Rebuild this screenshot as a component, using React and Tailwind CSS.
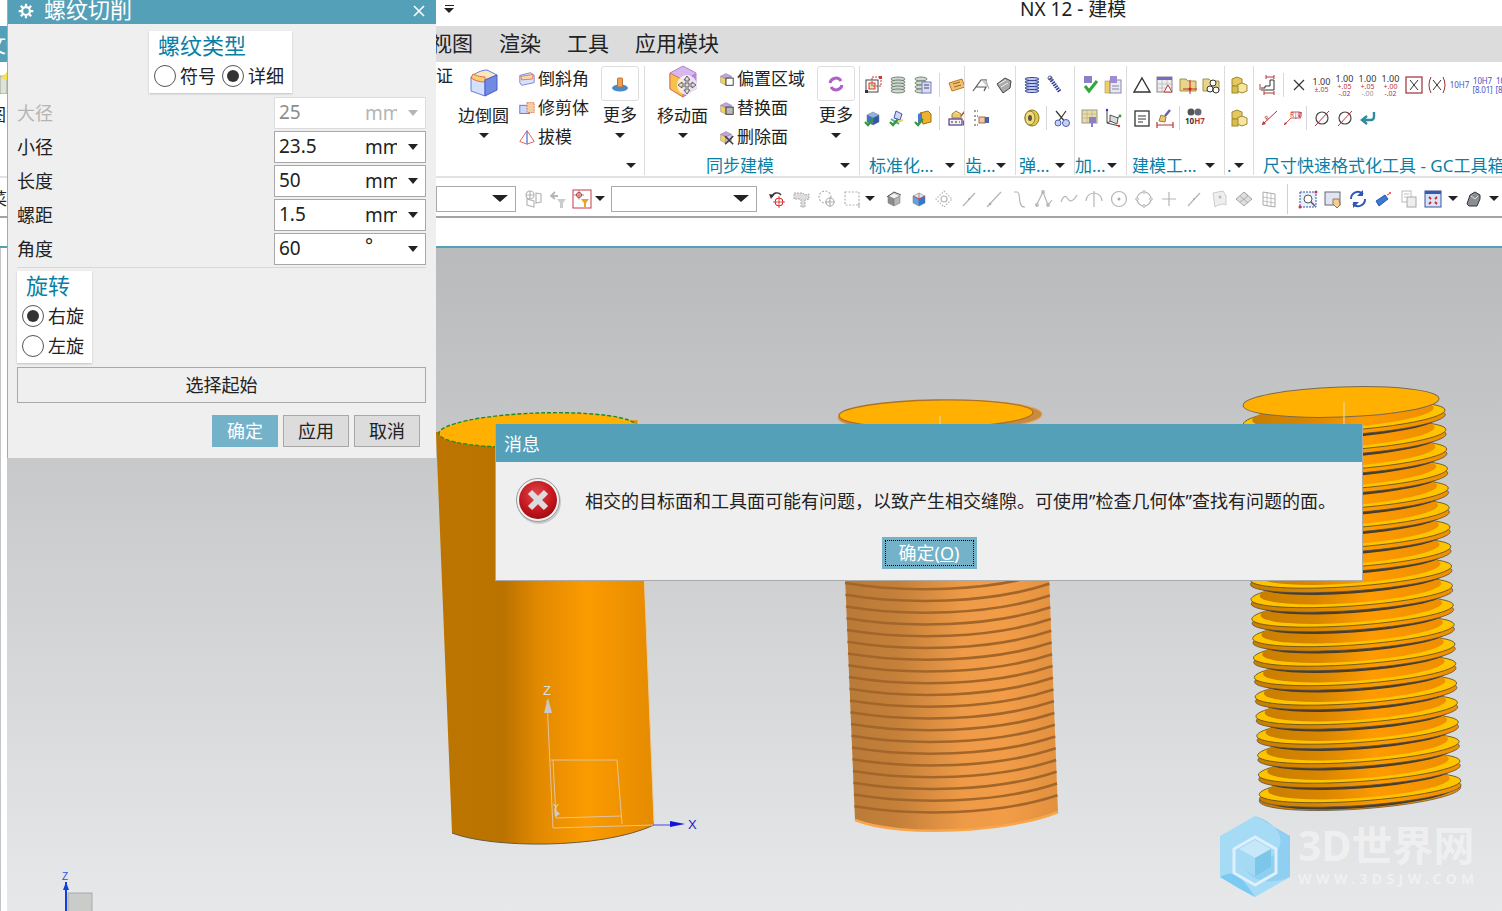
import React from "react";

const FONT = "font-['Noto_Sans','Noto_Sans_CJK_SC',sans-serif]";

const Caret = ({ big }) => (
  <span className={big ? "block w-0 h-0 border-x-[8px] border-x-transparent border-t-[7px] border-t-[#222]" : "block w-0 h-0 border-x-[5px] border-x-transparent border-t-[5px] border-t-[#222]"} />
);

// ribbon + toolbar drawings, all on a 20x20 box
const gray = { fill: "none", stroke: "#b5b5b5", strokeWidth: 1.2 };
const cube = (a, b, c) => (
  <>
    <path d="M4 7l6-3 6 3-6 3z" fill={a} stroke="#777" strokeWidth=".5" />
    <path d="M4 7v7l6 3v-7z" fill={b} stroke="#777" strokeWidth=".5" />
    <path d="M16 7v7l-6 3v-7z" fill={c} stroke="#777" strokeWidth=".5" />
  </>
);
const check = <path d="M2 14l3 3 5-6" fill="none" stroke="#2f9a3a" strokeWidth="2.2" />;
const ICONS = {
  select: (<><rect x="3" y="5" width="12" height="12" fill="none" stroke="#444" /><rect x="6" y="8" width="6" height="6" fill="#d8e8b0" stroke="#d33" /><rect x="9" y="2" width="9" height="9" fill="none" stroke="#d33" strokeDasharray="2 1" /><rect x="2" y="15" width="3" height="3" fill="#333" /><rect x="16" y="1" width="3" height="3" fill="#d33" /></>),
  stack: (<>{[4, 7, 10, 13, 16].map((y) => <ellipse key={y} cx="10" cy={y} rx="7" ry="2" fill="#cfd8cf" stroke="#5d6d5d" strokeWidth=".8" />)}</>),
  stackForm: (<>{[4, 8, 12, 16].map((y) => <ellipse key={y} cx="8" cy={y} rx="6" ry="2" fill="#cfd8cf" stroke="#5d6d5d" strokeWidth=".8" />)}<rect x="9" y="7" width="9" height="11" fill="#d8dcf5" stroke="#7a80c0" /><path d="M11 10h5M11 13h5" stroke="#446" /></>),
  tag: (<><path d="M2 8l13-4 3 8-13 4z" fill="#f4bf6a" stroke="#b9772a" /><path d="M6 9l7-2M7 12l7-2" stroke="#8a6a30" /></>),
  blueCheck: (<>{cube("#8ab4ee", "#3f72c8", "#2f58a8")}{check}</>),
  wrench: (<><path d="M8 3l6 3-2 6-6-2z" fill="#d0d4f5" stroke="#4a50b0" /><path d="M4 16l11-4" stroke="#f0d060" strokeWidth="2" /><path d="M3 11l8 5" stroke="#4ab0a0" strokeWidth="2" />{check}</>),
  yellowCheck: (<><path d="M7 5l8-2 3 3v8l-8 2z" fill="#f0b030" stroke="#a07010" /><path d="M5 6l4-1v9l-4 1z" fill="#4a78d0" />{check}</>),
  boxPen: (<><path d="M5 6l4-3 5 3-4 3z" fill="#f3d98a" stroke="#a08030" /><path d="M5 6v4h9V6" fill="#eccb70" stroke="#a08030" /><rect x="2" y="11" width="13" height="6" fill="#f2f2f2" stroke="#53388c" strokeWidth="1.2" /><path d="M4 14h2M8 14h2M12 14h1" stroke="#333" strokeWidth="1.2" /><path d="M16 12l3 3-3 3z" fill="#b030a8" /><path d="M14 8l4-5" stroke="#c05030" strokeWidth="1.5" /></>),
  gearA: (<><path d="M2 16L10 5h6M5 12h10l-2 4" fill="none" stroke="#555" strokeWidth="1.2" /><path d="M10 5l5 0 3 9" fill="#ccc" stroke="#888" strokeWidth=".6" /></>),
  gearB: (<><path d="M3 9l8-6 6 3-1 7-7 5z" fill="#aaa" stroke="#444" /><path d="M5 9l7-4M7 12l7-4" stroke="#eee" /></>),
  rack: (<><path d="M3 3h4M3 8h4M3 12h3M3 17h4" stroke="#444" strokeDasharray="2 1" /><rect x="8" y="9" width="6" height="6" fill="#f0c8a0" stroke="#a07050" /><rect x="14" y="9" width="4" height="6" fill="#4a60b0" /></>),
  spring: (<>{[4, 7, 10, 13, 16].map((y) => <ellipse key={y} cx="10" cy={y} rx="7" ry="1.5" fill="#c8d0f0" stroke="#2f3f96" strokeWidth="1" />)}</>),
  spring2: (<><path d="M5 3l10 14" stroke="#2f3f96" strokeWidth="4" strokeDasharray="1.5 1" /><circle cx="5" cy="3" r="2" fill="none" stroke="#567" /></>),
  washer: (<><ellipse cx="10" cy="10" rx="7" ry="8" fill="#e2c94a" stroke="#8a7a20" /><ellipse cx="8" cy="10" rx="5" ry="7" fill="#f2dd7a" stroke="#8a7a20" /><ellipse cx="8" cy="10" rx="2" ry="3" fill="#555" /></>),
  scissor: (<><path d="M4 3l10 12M14 3L6 14" stroke="#333" strokeWidth="1.2" /><circle cx="14" cy="15" r="3.5" fill="#c8d0f0" stroke="#4a60b0" /><circle cx="6" cy="15" r="3" fill="#c8d0f0" stroke="#4a60b0" /></>),
  pinCheck: (<><rect x="4" y="1" width="8" height="7" fill="#8a80c8" /><path d="M5 11l4 5 8-10" fill="none" stroke="#2fa83a" strokeWidth="3" /></>),
  pinSheet: (<><rect x="2" y="6" width="5" height="12" fill="#f0d060" stroke="#a08030" strokeWidth=".5" /><rect x="7" y="5" width="11" height="13" fill="#e6eaf5" stroke="#88a" /><rect x="7" y="1" width="7" height="7" fill="#a08ad0" /><path d="M9 11h7M9 14h7" stroke="#889" /></>),
  gridPin: (<><rect x="2" y="2" width="15" height="13" fill="#ecdca0" stroke="#998" /><path d="M2 6h15M2 10h15M7 2v13M12 2v13" stroke="#aaa" strokeWidth=".6" /><rect x="9" y="9" width="7" height="6" fill="#8a80c8" /><path d="M12 15v4" stroke="#8a80c8" strokeWidth="2" /></>),
  axes: (<><path d="M4 2v13l12 3M4 15l12-6" fill="none" stroke="#444" /><path d="M7 7l8 3-1 6-7-3z" fill="#ddd" stroke="#555" /><circle cx="17" cy="8" r="1.4" fill="#2a9a3a" /><circle cx="16" cy="18" r="1.2" fill="#d33" /><circle cx="4" cy="2" r="1.2" fill="#33c" /></>),
  triangle: <path d="M10 3l8 14H2z" fill="none" stroke="#333" strokeWidth="1.4" />,
  table: (<><rect x="2" y="2" width="15" height="15" fill="#eee" stroke="#888" /><rect x="2" y="2" width="15" height="3" fill="#7a68c8" /><path d="M2 9h15M2 13h15M7 5v12M12 5v12" stroke="#aaa" strokeWidth=".6" /><path d="M13 10l4 7h-8z" fill="#fff" stroke="#c33" /></>),
  folderCross: (<><path d="M2 4h6l2 2h8v10H2z" fill="#e8d48a" stroke="#a09040" /><path d="M12 5v14M5 14h14" stroke="#c22" /><circle cx="12" cy="14" r="1.5" fill="#c22" /></>),
  folderRings: (<><path d="M2 4h6l2 2h8v10H2z" fill="#e8d48a" stroke="#a09040" /><circle cx="9" cy="14" r="3" fill="#fff" stroke="#333" /><circle cx="15" cy="15" r="3" fill="#fff" stroke="#333" /><circle cx="12" cy="8" r="3" fill="#fff" stroke="#333" /></>),
  note: (<><rect x="3" y="3" width="14" height="15" fill="#fff" stroke="#333" strokeWidth="1.3" /><path d="M6 8h8M6 11h8M6 14h5" stroke="#333" /></>),
  broom: (<><path d="M15 2l-5 6" stroke="#6a60b0" strokeWidth="2.5" /><path d="M6 7l5 2-1 5-6-1z" fill="#e4c878" stroke="#a08030" /><path d="M2 17h16M2 14v6M18 14v6" stroke="#b8343a" strokeWidth="1.2" /></>),
  binoc: (<><circle cx="6" cy="4" r="3.5" fill="#555" /><circle cx="13" cy="4" r="3.5" fill="#667" /><text x="0" y="16" fontSize="8" fontWeight="700" fill="#333">10<tspan fill="#b8343a">H7</tspan></text></>),
  boxes: (<><path d="M7 2l5 2v6l-5 2-5-2V4z" fill="#e6c860" stroke="#a08830" /><path d="M12 8l5 2v6l-5 2-5-2v-6z" fill="#f5e6a0" stroke="#a08830" /><rect x="2" y="11" width="6" height="7" fill="#d8c048" stroke="#a08830" /></>),
  dimStep: (<><path d="M2 13h4v-2h5V5h4v10H2" fill="none" stroke="#333" /><path d="M7 2h8M7 0v4M15 0v4M5 18h10M5 16v4M15 16v4M1 9v6" stroke="#b8343a" /></>),
  x: <path d="M5 5l10 10M15 5L5 15" stroke="#333" strokeWidth="1.2" />,
  xBox: (<><rect x="2" y="2" width="16" height="16" fill="none" stroke="#9a3038" strokeWidth="1.2" /><path d="M6 5l8 10M14 5L6 15" stroke="#333" /></>),
  xParen: (<><path d="M4 2Q0 10 4 18M16 2q4 8 0 16" fill="none" stroke="#9a3038" /><path d="M6 5l8 10M14 5L6 15" stroke="#333" /></>),
  slant: (<><path d="M3 17L18 3" stroke="#b8343a" /><path d="M3 17l4-1-3-3z" fill="#b8343a" /><text x="6" y="12" fontSize="6" fill="#b8343a" transform="rotate(-40 8 10)">R</text></>),
  rbox: (<><path d="M2 17L9 10h10M9 4h9v6" fill="none" stroke="#b8343a" strokeWidth=".8" /><text x="8" y="9" fontSize="6.5" fill="#b8343a">R|Ø|</text><path d="M2 17l3-1-2-2z" fill="#b8343a" /></>),
  phi: (<><circle cx="10" cy="10" r="6" fill="none" stroke="#444" strokeWidth="1.2" /><path d="M3 18L17 3" stroke="#b8343a" /></>),
  ret: <path d="M16 4v5a3 3 0 01-3 3H6m3-4l-5 4 5 4" fill="none" stroke="#2f8a9a" strokeWidth="2.4" />,
  // toolbar
  gCube: (<><circle cx="6" cy="6" r="4" {...gray} /><path d="M2 6h8M6 2v8" {...gray} /><path d="M3 10l7 2v6l-7-2zM12 4l5 1v8l-5 1z" {...gray} /></>),
  gFun: (<><path d="M3 7h7m-3-4L3 7l4 3" {...gray} strokeWidth="1.8" /><path d="M9 10h9l-3 4v5h-3v-5z" fill="#ccc" /></>),
  redFun: (<><rect x="1" y="1" width="18" height="18" fill="#fff" stroke="#c83a48" /><circle cx="7" cy="6" r="2.5" fill="none" stroke="#a33" /><path d="M2 6h10M7 1.500v9" stroke="#a33" strokeWidth=".7" /><path d="M9 10h8l-3 4v4h-2v-4z" fill="#eba030" /></>),
  undoT: (<><path d="M5 8a5 5 0 019-2" fill="none" stroke="#333" strokeWidth="1.3" /><path d="M2 5l5 1-3 4z" fill="#333" /><circle cx="12" cy="13" r="4" fill="none" stroke="#d22" /><path d="M6 13h12M12 7v12" stroke="#d22" strokeWidth=".8" /></>),
  gBlob: (<><path d="M2 4h9l2 2 4-1v5l-4 1v7H9v-8H2z" fill="#ddd" stroke="#aaa" strokeDasharray="2 1" /></>),
  gDotC: (<><circle cx="8" cy="8" r="6" {...gray} strokeDasharray="2 1.500" /><circle cx="13" cy="13" r="4" {...gray} /><path d="M8 13h10M13 8v10" {...gray} /></>),
  gRect: (<><rect x="3" y="3" width="14" height="13" {...gray} strokeDasharray="2 1.500" /><path d="M17 14v5" {...gray} /></>),
  cubeG: (<>{cube("#f2f2f2", "#8d8d8d", "#b5b5b5")}<path d="M3 8l7-5 7 3" fill="none" stroke="#555" /></>),
  cubeB: (<>{cube("#cfeafa", "#5ba4e8", "#2f78d8")}<path d="M10 4v6M4 7l6 3 6-3" stroke="#e22" strokeWidth=".6" fill="none" /></>),
  gDiam: (<><path d="M10 2l8 8-8 8-8-8z" {...gray} strokeDasharray="1.500 1.500" /><circle cx="10" cy="10" r="3" {...gray} /></>),
  gLine: (<><path d="M4 17L16 4" {...gray} /><circle cx="10" cy="10" r="1" fill="#aaa" /></>),
  gLine2: (<><path d="M3 18L17 3" {...gray} /><circle cx="6" cy="15" r="1.300" fill="#aaa" /></>),
  gS: <path d="M5 3h3c3 0 2 6 3 10s2 5 5 5" {...gray} />,
  gA: (<><path d="M2 17L9 3l5 13 4-5" {...gray} /><circle cx="9" cy="3" r="1.300" {...gray} /><circle cx="14" cy="16" r="1.300" {...gray} /><circle cx="3" cy="16" r="1.300" {...gray} /></>),
  gWave: <path d="M2 13c3-8 5-6 7-3s5 3 9-4" {...gray} />,
  gArc: (<><path d="M2 12a8 8 0 0116 0M10 2v16" {...gray} /></>),
  gCir: (<><circle cx="10" cy="10" r="7.500" {...gray} /><circle cx="10" cy="10" r="1.500" fill="#aaa" /></>),
  gCir4: (<><circle cx="10" cy="10" r="7" {...gray} />{[[10, 3], [10, 17], [3, 10], [17, 10]].map(([x, y]) => <circle key={x + "" + y} cx={x} cy={y} r="1.300" fill="#fff" stroke="#b5b5b5" />)}</>),
  gPlus: <path d="M10 3v14M3 10h14" {...gray} />,
  gSurf: (<><path d="M4 4l10-2 3 5v9c-4-2-8 0-11 2z" fill="#eee" stroke="#ccc" /><circle cx="11" cy="8" r="1.500" fill="#bbb" /></>),
  gGrid: (<><path d="M10 3l8 7-8 7-8-7z" fill="#ddd" stroke="#aaa" /><path d="M6 7l8 7M10 3l4 4M6 13l8-6" stroke="#999" strokeWidth=".7" /></>),
  gMesh: (<><path d="M4 3l12 2v13L4 16z" fill="none" stroke="#aaa" /><path d="M8 4v13M12 4.500v13M4 8l12 2M4 12l12 2" stroke="#aaa" strokeWidth=".7" /></>),
  zoomBox: (<><rect x="2" y="3" width="16" height="15" fill="#e8f0fa" stroke="#3a50c0" strokeDasharray="2 1" /><circle cx="10" cy="10" r="4" fill="#fff" stroke="#555" /><path d="M13 13l4 4" stroke="#555" strokeWidth="1.500" /><circle cx="2" cy="18" r="1.500" fill="#c33" /><circle cx="18" cy="3" r="1.500" fill="#c33" /></>),
  handWin: (<><rect x="2" y="3" width="15" height="13" fill="#dfe6f2" stroke="#667" /><path d="M10 10l6 0 1 6-3 3-4-4z" fill="#f2cf9a" stroke="#a07a40" /></>),
  rotate: (<><path d="M3 10a7 7 0 0112-5M17 10a7 7 0 01-12 5" fill="none" stroke="#2f56b8" strokeWidth="2" /><path d="M15 1v6h-6" fill="#2f56b8" /><path d="M5 19v-6h6" fill="#2f56b8" /></>),
  prism: (<><path d="M3 12l9-6 3 4-9 7z" fill="#3a78d8" stroke="#2a58a8" /><circle cx="17" cy="4" r="1" fill="#e33" /><path d="M14 6l2-1" stroke="#e33" /></>),
  pages: (<><rect x="4" y="2" width="9" height="11" fill="#fff" stroke="#bbb" /><rect x="9" y="8" width="9" height="10" fill="#eee" stroke="#aaa" /><path d="M6 5h5M6 8h2" stroke="#bbb" /></>),
  redGrid: (<><rect x="2" y="2" width="16" height="16" fill="#d8e4f8" stroke="#3a50a0" /><rect x="2" y="2" width="16" height="3" fill="#3a5ab0" /><path d="M6 8l2 2M14 8l-2 2M6 15l2-2M14 15l-2-2" stroke="#d22" strokeWidth="1.800" /></>),
  gBoxes: (<><path d="M3 15l3-9 5-3 5 3v4l-3 7H5z" fill="#8a8f96" stroke="#333" /><path d="M7 7l4 3 3-3" fill="none" stroke="#ddd" /></>),
  // small ribbon
  chamfer: (<><path d="M2 6l12-3 4 3v8l-14 3-2-3z" fill="#d9e2fb" stroke="#6f7fe0" /><path d="M3 7l14-2-1 5-12 1z" fill="#f6d9a8" stroke="#e4705a" /></>),
  trim: (<><rect x="2" y="7" width="11" height="9" fill="#cdd8fa" stroke="#5a6ce0" /><rect x="10" y="4" width="8" height="11" fill="#f4cda0" stroke="#e07a50" strokeDasharray="2 1" /></>),
  draft: (<><path d="M10 3L2 15l8 3 8-3z" fill="#fff" stroke="#e05050" /><path d="M10 3v15" stroke="#5a78d8" strokeWidth="1.500" /></>),
  pushPull: (<><ellipse cx="10" cy="14" rx="8" ry="3.500" fill="#4a88c8" /><rect x="7.500" y="4" width="5" height="9" rx="1" fill="#f0a050" stroke="#c07030" /></>),
  offset: (<>{cube("#c8a0e8", "#f4d060", "#d8d0f0")}<rect x="10" y="9" width="8" height="8" fill="#fff" stroke="#333" /></>),
  replace: (<>{cube("#c8a0e8", "#f4d060", "#d8d0f0")}<rect x="10" y="9" width="8" height="8" fill="#bbb" stroke="#333" /></>),
  del: (<>{cube("#c8a0e8", "#f4d060", "#d8d0f0")}<path d="M9 9l9 9M18 9l-9 9" stroke="#444" strokeWidth="1.800" /></>),
  cycle: (<><path d="M4 9a6 6 0 0111-2" fill="none" stroke="#b060c8" strokeWidth="3" /><path d="M16 11a6 6 0 01-11 2" fill="none" stroke="#b060c8" strokeWidth="3" /></>),
};

const Ic = ({ n, size = 20 }) => (
  <svg viewBox="0 0 20 20" width={size} height={size} className="block shrink-0">{ICONS[n]}</svg>
);

const Cell = ({ n, children, w = "w-[23px]" }) => (
  <span className={`${w} h-[24px] flex items-center justify-center shrink-0`}>{n ? <Ic n={n} /> : children}</span>
);
const Sep = () => <span className="w-px h-[24px] bg-[#d8d8d8] mx-[3px] shrink-0" />;

const Tol = ({ a, b, c, tone = "text-[#b8343a]" }) => (
  <span className="flex flex-col items-center text-[7px] leading-[7px]">
    <span className="text-[#333] text-[9px] leading-[9px]">1.00</span>
    <span className={tone}>{a}</span>
    {b && <span className={c || tone}>{b}</span>}
  </span>
);

function IconGroup({ w, pl, row1, row2, label, gap = "", last }) {
  return (
    <div className={`${w} shrink-0 flex flex-col mt-[4px] mb-px ${last ? "" : "border-r border-[#dcdcdc]"}`}>
      <div className={`h-[90px] pt-[7px] ${pl} overflow-hidden`}>
        <div className={`flex ${gap} items-center`}>{row1}</div>
        <div className={`flex ${gap} items-center mt-[9px]`}>{row2}</div>
      </div>
      {label}
    </div>
  );
}

const Lab = ({ text, pad = "pl-[9px] pr-[9px]" }) => (
  <div className={`h-[19px] flex items-center justify-between ${pad} text-[17px] leading-[19px] text-[#0a7fa6] whitespace-nowrap`}>
    <span>{text}</span>
    <Caret />
  </div>
);

const icons = (list) => list.map((n, i) => (n === "|" ? <Sep key={i} /> : <Cell key={i} n={n} />));

const SmallItem = ({ n, text }) => (
  <div className="h-[29px] flex items-center gap-[2px] text-[17px] leading-[22px] text-[#222] whitespace-nowrap">
    <Ic n={n} size={18} />
    <span>{text}</span>
  </div>
);

const BigBtn = ({ w, label, children }) => (
  <div className={`${w} flex flex-col items-center shrink-0`}>
    <div className="h-[33px] flex items-end">{children}</div>
    <div className="mt-[5px] h-[24px] text-[17px] leading-[24px] text-[#222] whitespace-nowrap">{label}</div>
    <div className="mt-[5px]"><Caret /></div>
  </div>
);

const MoreBtn = ({ n }) => (
  <div className="w-[38px] flex flex-col items-center shrink-0">
    <div className="w-[38px] h-[35px] border border-[#dedede] rounded-[3px] flex items-center justify-center"><Ic n={n} /></div>
    <div className="mt-[2px] h-[24px] text-[17px] leading-[24px] text-[#222]">更多</div>
    <div className="mt-[6px]"><Caret /></div>
  </div>
);

function Ribbon() {
  return (
    <div className="h-[116px] flex border-b-2 border-[#e2e2e2] bg-white">
      <div className="w-[436px] shrink-0 relative overflow-hidden">
        <div className="pt-[8px] flex flex-col">
          <svg viewBox="0 0 8 24" width="8" height="24" className="block"><rect x="0" y="6" width="7" height="18" fill="#dde3d5" stroke="#777" strokeWidth=".6" /><path d="M1 8l6-6v8z" fill="#f8e24a" /></svg>
          <span className="block -ml-[11px] mt-[10px] text-[17px] leading-[22px] text-[#222]">图</span>
        </div>
      </div>
      <div className="w-[209px] shrink-0 flex flex-col mt-[4px] mb-px border-r border-[#dcdcdc]">
        <div className="h-[90px] flex">
          <div className="w-[22px] shrink-0 text-[17px] leading-[22px] text-[#222] -mt-[1px]">证</div>
          <BigBtn w="w-[51px]" label="边倒圆">
            <svg viewBox="0 0 32 32" width="32" height="32" className="block"><path d="M3 10c4-4 11-7 16-7l10 5-12 5C12 13 6 12 3 10z" fill="#f9e6c0" stroke="#6878e0" /><path d="M3 10c4 3 9 4 14 4v15L3 24z" fill="#d5e1fa" stroke="#6878e0" /><path d="M3 11c5 3 9 4 14 4v-5C12 10 7 8 5 7z" fill="#f8d270" stroke="#e56a4e" /><path d="M17 13l12-5v15l-12 6z" fill="#6f8be2" stroke="#4a5cc8" /></svg>
          </BigBtn>
          <div className="ml-[9px] w-[83px] shrink-0 -mt-[2px]">
            <SmallItem n="chamfer" text="倒斜角" />
            <SmallItem n="trim" text="修剪体" />
            <SmallItem n="draft" text="拔模" />
          </div>
          <MoreBtn n="pushPull" />
        </div>
        <div className="h-[19px] flex items-center justify-end pr-[8px]"><Caret /></div>
      </div>
      <div className="w-[215px] shrink-0 flex flex-col mt-[4px] mb-px border-r border-[#dcdcdc]">
        <div className="h-[90px] flex pl-[12px]">
          <BigBtn w="w-[51px]" label="移动面">
            <svg viewBox="0 0 34 34" width="34" height="34" className="block"><path d="M17 1l13 7v16l-13 8-13-8V8z" fill="#d8b8ec" stroke="#b080d0" /><path d="M4 8l13 7v17L4 24z" fill="#f6c24c" stroke="#e0705a" /><path d="M17 15l13-7v16l-13 8z" fill="#b684d8" /><circle cx="21" cy="20" r="10" fill="#fff" opacity=".75" /><path d="M21 11l3 4h-2v4h4v-2l4 3-4 3v-2h-4v4h2l-3 4-3-4h2v-4h-4v2l-4-3 4-3v2h4v-4h-2z" fill="#dcdcdc" stroke="#555" strokeWidth=".9" /></svg>
          </BigBtn>
          <div className="ml-[9px] w-[100px] shrink-0 -mt-[2px]">
            <SmallItem n="offset" text="偏置区域" />
            <SmallItem n="replace" text="替换面" />
            <SmallItem n="del" text="删除面" />
          </div>
          <MoreBtn n="cycle" />
        </div>
        <div className="h-[19px] flex items-center pr-[9px] text-[17px] leading-[19px] text-[#0a7fa6]">
          <span className="ml-[61px] flex-1">同步建模</span>
          <Caret />
        </div>
      </div>
      <IconGroup w="w-[105px]" pl="pl-px" gap="gap-[2px]"
        row1={icons(["select", "stack", "stackForm", "|", "tag"])}
        row2={icons(["blueCheck", "wrench", "yellowCheck", "|", "boxPen"])}
        label={<Lab text="标准化..." />} />
      <IconGroup w="w-[51px]" pl="pl-[4px]"
        row1={icons(["gearA", "gearB"])} row2={icons(["rack"])}
        label={<Lab text="齿..." pad="pl-0 pr-[9px]" />} />
      <IconGroup w="w-[59px]" pl="pl-[4px]"
        row1={icons(["spring", "spring2"])} row2={icons(["washer", "|", "scissor"])}
        label={<Lab text="弹..." pad="pl-[3px] pr-[9px]" />} />
      <IconGroup w="w-[52px]" pl="pl-[3px]"
        row1={icons(["pinCheck", "pinSheet"])} row2={icons(["gridPin", "axes"])}
        label={<Lab text="加..." pad="pl-0 pr-[9px]" />} />
      <IconGroup w="w-[98px]" pl="pl-[3px]"
        row1={icons(["triangle", "table", "folderCross", "folderRings"])} row2={icons(["note", "broom", "|", "binoc"])}
        label={<Lab text="建模工..." pad="pl-[5px] pr-[9px]" />} />
      <IconGroup w="w-[29px]" pl="pl-[3px]"
        row1={icons(["boxes"])} row2={icons(["boxes"])}
        label={<Lab text="." pad="pl-[2px] pr-[9px]" />} />
      <IconGroup w="w-[248px]" pl="pl-[3px]" last
        row1={<>
          <Cell n="dimStep" /><Sep /><Cell n="x" />
          <Cell><Tol a="±.05" /></Cell>
          <Cell><Tol a="+.05" b="-.02" /></Cell>
          <Cell><Tol a="+.05" b="-.00" c="text-[#999]" /></Cell>
          <Cell><Tol a="+.00" b="-.02" /></Cell>
          <Cell n="xBox" /><Cell n="xParen" />
          <Cell><span className="text-[8px] text-[#4a52c8]">10H7</span></Cell>
          <Cell><span className="text-[8px] leading-[9px] tracking-tight text-[#4a52c8] text-center">10H7<br />[8.01]</span></Cell>
          <Cell><span className="text-[8px] leading-[9px] tracking-tight text-[#4a52c8] text-center">10H7<br />[8.01]</span></Cell>
        </>}
        row2={icons(["slant", "rbox", "|", "phi", "phi", "ret"])}
        label={<div className="h-[19px] pl-[9px] text-[17px] leading-[19px] text-[#0a7fa6] whitespace-nowrap overflow-hidden">尺寸快速格式化工具 - GC工具箱</div>} />
    </div>
  );
}

const Combo = ({ w }) => (
  <div className={`${w} h-[26px] border border-[#aaa] bg-white flex items-center justify-end pr-[7px] shrink-0`}><Caret big /></div>
);
const T = ({ n }) => <Cell n={n} w="w-[25px]" />;
const TC = () => <span className="w-[12px] flex justify-center shrink-0"><Caret /></span>;

function Toolbar() {
  return (
    <div className="h-[40px] pt-[3px] flex items-center bg-white border-b-2 border-[#a3a5a5]">
      <div className="w-[436px] shrink-0 overflow-hidden">
        <span className="block -ml-[10px] text-[17px] leading-[22px] text-[#222]">菜</span>
      </div>
      <Combo w="w-[80px]" />
      <span className="ml-[6px] flex">
        <Cell n="gCube" w="w-[24px]" /><Cell n="gFun" w="w-[24px]" /><Cell n="redFun" w="w-[24px]" />
      </span>
      <TC />
      <span className="ml-[5px]" />
      <Combo w="w-[146px]" />
      <span className="ml-[7px]" />
      {["undoT", "gBlob", "gDotC", "gRect"].map((n) => <T key={n} n={n} />)}
      <TC />
      <span className="ml-[5px]" />
      {["cubeG", "cubeB", "gDiam", "gLine", "gLine2", "gS", "gA", "gWave", "gArc", "gCir", "gCir4", "gPlus", "gLine", "gSurf", "gGrid", "gMesh"].map((n, i) => <T key={i} n={n} />)}
      <span className="ml-[6px] w-px h-[30px] bg-[#d0d0d0]" />
      <span className="ml-[7px]" />
      {["zoomBox", "handWin", "rotate", "prism", "pages", "redGrid"].map((n) => <T key={n} n={n} />)}
      <span className="ml-[2px]" />
      <TC />
      <span className="ml-[2px]" />
      <T n="gBoxes" />
      <span className="ml-[2px]" />
      <TC />
    </div>
  );
}

function ScrewDiscs() {
  const discs = [];
  for (let k = 0; k < 20; k++) {
    const cx = 1360 - 0.83 * k;
    const cy = 787.5 - 19.5 * k;
    discs.push(
      <g key={k} transform={`rotate(-4 ${cx} ${cy})`}>
        <ellipse cx={cx} cy={cy + 7.5} rx={92} ry={13} fill="#4a3d2a" />
        <ellipse cx={cx} cy={cy + 4.5} rx={101} ry={13.5} fill="url(#discBand)" stroke="#4d4d4d" strokeWidth=".7" />
        <ellipse cx={cx} cy={cy} rx={101} ry={13.5} fill="#ffc400" stroke="#5a4a20" strokeWidth=".8" />
        <ellipse cx={cx - 1} cy={cy - 3} rx={91} ry={13.5} fill="url(#discBand)" />
      </g>
    );
  }
  return (
    <>
      <ellipse cx="1360" cy="794" rx="101" ry="15" transform="rotate(-4 1360 794)" fill="url(#discBand)" stroke="#4d4d4d" strokeWidth=".7" />
      {discs}
      <ellipse cx="1341" cy="402" rx="98" ry="15" transform="rotate(-2 1341 402)" fill="#ffb000" stroke="#7a6a50" strokeWidth="1" />
      <path d="M1344 402v22" stroke="#e8dcc0" strokeWidth="1" />
    </>
  );
}

function Scene() {
  const lines = [];
  for (let i = 0; i < 20; i++) {
    const y = 583 + 11.75 * i;
    const t = (y - 583) / 237;
    const xl = 845 + t * 10;
    const xr = 1049 + t * 9;
    lines.push(<path key={i} d={`M${xl} ${y}C${xl + 60} ${y + 10} ${xr - 60} ${y + 9} ${xr} ${y - 11}`} fill="none" stroke="#a3662a" strokeWidth="2.6" />);
  }
  return (
    <svg viewBox="7 248 1495 663" width="1495" height="663" className="block">
      <defs>
        <linearGradient id="cyl1" gradientUnits="userSpaceOnUse" x1="440" x2="655" y1="0" y2="0">
          <stop offset="0" stopColor="#bd7500" /><stop offset=".3" stopColor="#bb7300" /><stop offset=".45" stopColor="#e08800" /><stop offset=".68" stopColor="#fb9b00" /><stop offset="1" stopColor="#e58b00" />
        </linearGradient>
        <linearGradient id="cyl2" gradientUnits="userSpaceOnUse" x1="845" x2="1058" y1="0" y2="0">
          <stop offset="0" stopColor="#b87a38" /><stop offset=".25" stopColor="#c5803a" /><stop offset=".55" stopColor="#ee9a47" /><stop offset=".75" stopColor="#f29c47" /><stop offset="1" stopColor="#e2913f" />
        </linearGradient>
        <linearGradient id="discBand" gradientUnits="objectBoundingBox" x1="0" x2="1" y1="0" y2="0">
          <stop offset="0" stopColor="#c97e00" /><stop offset=".3" stopColor="#d98600" /><stop offset=".6" stopColor="#ff9b00" /><stop offset="1" stopColor="#ee8f00" />
        </linearGradient>
      </defs>

      <path d="M436 432L452 833C490 848 600 850 654 825L638 420z" fill="url(#cyl1)" />
      <path d="M452 833C490 848 600 850 654 825" fill="none" stroke="#6a5a40" strokeWidth="1" />
      <path d="M638 420L654 822" stroke="#e9c9a0" strokeWidth="1" />
      <ellipse cx="538" cy="430" rx="99" ry="17" transform="rotate(-2 538 430)" fill="#ffb000" stroke="#1f8a2a" strokeWidth="1.400" strokeDasharray="4 2" />

      <path d="M845 575H1049L1058 812C1010 832 900 838 855 820z" fill="url(#cyl2)" />
      <path d="M855 820C900 838 1010 832 1058 812" fill="none" stroke="#f8a64c" strokeWidth="2.500" />
      {lines}
      <ellipse cx="940" cy="416" rx="102" ry="16" transform="rotate(-1 940 416)" fill="#c98a42" stroke="#e9a25a" strokeWidth="1" />
      <ellipse cx="936" cy="414" rx="97" ry="14" transform="rotate(-1 936 414)" fill="#ffb000" stroke="#ad7428" strokeWidth="1.400" />
      <path d="M940 416v8" stroke="#eadcc0" strokeWidth="1" />

      <ScrewDiscs />

      <g fill="none" stroke="#e2c3a0" strokeWidth="1">
        <path d="M547 700L553 828L653 825M551 760L617 760L622 824M553 760L556 818L622 816" />
      </g>
      <path d="M544 713l4-15 4 15z" fill="#c8c8c8" />
      <path d="M554 808l6 6-5 3z" fill="#ccc" />
      <path d="M654 825H672" stroke="#7a7ae8" strokeWidth="1.500" />
      <path d="M670 821l15 3-15 3z" fill="#1414d8" />
      <text x="688" y="829" fontSize="13" fill="#2020c8" fontFamily="Liberation Sans">X</text>
      <text x="543" y="695" fontSize="13" fill="#ddd" fontFamily="Liberation Sans">Z</text>
      <text x="553" y="810" fontSize="9" fill="#ddd" fontFamily="Liberation Sans">Y</text>

      <rect x="68" y="893" width="24" height="20" fill="#c9ccc9" stroke="#aaa" />
      <path d="M66 882V911" stroke="#1040e0" strokeWidth="2" />
      <path d="M63 890l3-8 3 8z" fill="#1040e0" />
      <text x="62" y="880" fontSize="10" fill="#3050e0" fontFamily="Liberation Sans">Z</text>

      <g>
        <path d="M1255 816l35 20v41l-35 20-35-20v-41z" fill="#a5dbf5" />
        <path d="M1255 816l35 20v41c-20 8-38 6-50-14 14 4 34-2 40-18 3-12-8-24-25-29z" fill="#8fd0f2" />
        <path d="M1220 877c14-8 20-3 35 20l-15-8z" fill="#7bcaf2" />
        <path d="M1255 837l21 12v24l-21 12-21-12v-24z" fill="none" stroke="#dff0fa" strokeWidth="3" />
        <path d="M1255 840l16 9-16 9-16-9z" fill="#c6e8f9" />
        <path d="M1239 849l16 9v18l-16-9z" fill="#a5daf5" />
        <path d="M1271 849l-16 9v18l16-9z" fill="#7cc6ea" />
      </g>
    </svg>
  );
}

const Radio = ({ on }) => (
  <span className="w-[22px] h-[22px] rounded-full border border-[#555] bg-white flex items-center justify-center shrink-0">
    {on && <span className="w-[12px] h-[12px] rounded-full bg-[#333]" />}
  </span>
);

const Field = ({ label, value, unit = "mm", off }) => (
  <div className="h-[32px] flex items-center">
    <span className={`flex-1 text-[18px] leading-[24px] ${off ? "text-[#b5b5b5]" : "text-[#222]"}`}>{label}</span>
    <div className={`w-[152px] h-[32px] border flex items-center bg-white ${off ? "border-[#dcdcdc] text-[#8d8d8d]" : "border-[#a8a8a8] text-[#222]"}`}>
      <span className="w-[90px] pl-[4px] -mt-[2px] text-[19px] leading-[24px]">{value}</span>
      <span className={`w-[32px] overflow-hidden text-[19px] leading-[24px] whitespace-nowrap ${off ? "text-[#b5b5b5]" : ""} ${unit === "°" ? "-mt-[6px]" : ""}`}>{unit}</span>
      <span className="ml-[11px]">
        <span className={`block w-0 h-0 border-x-[5px] border-x-transparent border-t-[6px] ${off ? "border-t-[#b5b5b5]" : "border-t-[#222]"}`} />
      </span>
    </div>
  </div>
);

function ThreadDialog() {
  return (
    <div className="absolute left-[7px] top-0 w-[429px] h-[458px] bg-[#efefef] border-l border-[#a9a9a9] flex flex-col">
      <div className="h-[24px] bg-[#54a0b9] flex items-center pl-[9px] pr-[11px] text-white overflow-hidden">
        <svg viewBox="0 0 16 16" width="18" height="18" className="block -mt-[3px]"><path d="M8 1.500v2.500M8 12v2.500M1.500 8H4M12 8h2.500M3.400 3.400l1.800 1.800M10.800 10.800l1.800 1.800M3.400 12.600l1.800-1.800M10.800 5.200l1.800-1.800" stroke="#fff" strokeWidth="2" /><circle cx="8" cy="8" r="3.500" fill="none" stroke="#fff" strokeWidth="2" /></svg>
        <span className="ml-[9px] flex-1 text-[22px] leading-[24px] -mt-[7px]">螺纹切削</span>
        <svg viewBox="0 0 12 12" width="12" height="12" className="block -mt-[2px]"><path d="M1 1l10 10M11 1L1 11" stroke="#fff" strokeWidth="1.600" /></svg>
      </div>
      <div className="flex-1 pl-[9px] pr-[10px] flex flex-col">
        <div className="self-center ml-[-2px] mt-[7px] w-[143px] h-[62px] bg-white shadow-[0_1px_2px_rgba(0,0,0,0.2)] px-[5px]">
          <div className="pl-[4px] text-[22px] leading-[28px] text-[#0a7fa6]">螺纹类型</div>
          <div className="flex items-center mt-[6px] text-[18px] leading-[22px] text-[#222]">
            <Radio /><span className="ml-[4px]">符号</span>
            <span className="ml-[6px]" /><Radio on /><span className="ml-[4px]">详细</span>
          </div>
        </div>
        <div className="mt-[4px] flex flex-col gap-[2px]">
          <Field label="大径" value="25" off />
          <Field label="小径" value="23.5" />
          <Field label="长度" value="50" />
          <Field label="螺距" value="1.5" />
          <Field label="角度" value="60" unit="°" />
        </div>
        <div className="mt-[2px] h-px bg-[#d8d8d8]" />
        <div className="mt-[3px] w-[75px] h-[92px] bg-white shadow-[0_1px_2px_rgba(0,0,0,0.2)] px-[5px]">
          <div className="pl-[4px] text-[22px] leading-[28px] text-[#0a7fa6]">旋转</div>
          <div className="mt-[2px] flex items-center h-[30px] text-[18px] text-[#222]"><Radio on /><span className="ml-[4px]">右旋</span></div>
          <div className="flex items-center h-[30px] text-[18px] text-[#222]"><Radio /><span className="ml-[4px]">左旋</span></div>
        </div>
        <div className="mt-[4px] h-[36px] border border-[#a8a8a8] flex items-center justify-center text-[18px] text-[#222]">选择起始</div>
        <div className="mt-[12px] pr-[6px] flex justify-end gap-[5px] text-[18px]">
          <div className="w-[66px] h-[32px] bg-[#74b2c9] text-white flex items-center justify-center">确定</div>
          <div className="w-[66px] h-[32px] bg-[#dcdcdc] border border-[#a8a8a8] text-[#222] flex items-center justify-center">应用</div>
          <div className="w-[66px] h-[32px] bg-[#dcdcdc] border border-[#a8a8a8] text-[#222] flex items-center justify-center">取消</div>
        </div>
      </div>
    </div>
  );
}

function MessageDialog() {
  return (
    <div className="absolute left-[495px] top-[424px] w-[868px] h-[157px] bg-[#efefef] border-l border-r border-b border-[#aaa] flex flex-col">
      <div className="h-[38px] bg-[#54a0b9] pl-[8px] text-white text-[18px] leading-[40px]">消息</div>
      <div className="flex items-center h-[78px] pl-[20px]">
        <svg viewBox="0 0 46 46" width="46" height="46" className="block shrink-0">
          <defs>
            <radialGradient id="errRed" cx=".45" cy=".35" r=".75"><stop offset="0" stopColor="#e0474f" /><stop offset=".6" stopColor="#c2161c" /><stop offset="1" stopColor="#8e0a0e" /></radialGradient>
          </defs>
          <circle cx="23" cy="24" r="22" fill="#888" opacity=".35" />
          <circle cx="22" cy="22" r="21.500" fill="#f2f2f2" stroke="#999" />
          <circle cx="22" cy="22" r="19" fill="url(#errRed)" />
          <path d="M14 14l16 16M30 14L14 30" stroke="#dcdcdc" strokeWidth="6" />
        </svg>
        <span className="ml-[23px] text-[18px] leading-[24px] text-[#222] whitespace-nowrap">相交的目标面和工具面可能有问题，以致产生相交缝隙。可使用”检查几何体”查找有问题的面。</span>
      </div>
      <div className="flex justify-center mt-[-3px]">
        <div className="w-[95px] h-[32px] bg-[#74b2c9] p-[3px]">
          <div className="w-full h-full border border-dotted border-black text-white text-[18px] leading-[24px] flex items-center justify-center whitespace-nowrap">确定(<span className="underline">O</span>)</div>
        </div>
      </div>
    </div>
  );
}

export default function App() {
  return (
    <div className={`relative w-[1502px] h-[911px] overflow-hidden bg-white flex flex-col ${FONT}`}>
      <div className="h-[26px] relative flex items-center pl-[444px]">
        <span className="flex flex-col items-center gap-[2px] -mt-[8px]"><span className="block w-[9px] h-px bg-[#222]" /><Caret /></span>
        <span className="ml-[566px] text-[19px] leading-[20px] text-[#222] -mt-[8px]">NX 12 - 建模</span>
      </div>
      <div className="h-[36px] bg-[#dcdcdc] flex items-center text-[21px] text-[#222]">
        <div className="w-[50px] h-[36px] bg-[#54a0b9] text-white overflow-hidden leading-[36px] whitespace-nowrap -mr-[50px]"><span className="block -ml-[15px]">文件</span></div>
        <div className="ml-[431px] flex gap-[26px]">
          <span>视图</span><span>渲染</span><span>工具</span><span>应用模块</span>
        </div>
      </div>
      <Ribbon />
      <Toolbar />
      <div className="h-[30px] bg-white border-b-2 border-[#54a0b9]" />
      <div className="flex-1 flex">
        <div className="w-[7px] bg-white border-l border-[#c4c4c4]" />
        <div className="flex-1 bg-linear-to-b from-[#b9babc] to-[#e7e8ea]"><Scene /></div>
      </div>
      <ThreadDialog />
      <MessageDialog />
      <div className="absolute left-[1298px] top-[820px] text-white/45">
        <div className="text-[41px] leading-[50px] font-bold whitespace-nowrap">3D世界网</div>
        <div className="mt-[2px] text-[14px] leading-[14px] font-bold tracking-[4.4px] whitespace-nowrap">WWW.3DSJW.COM</div>
      </div>
    </div>
  );
}
